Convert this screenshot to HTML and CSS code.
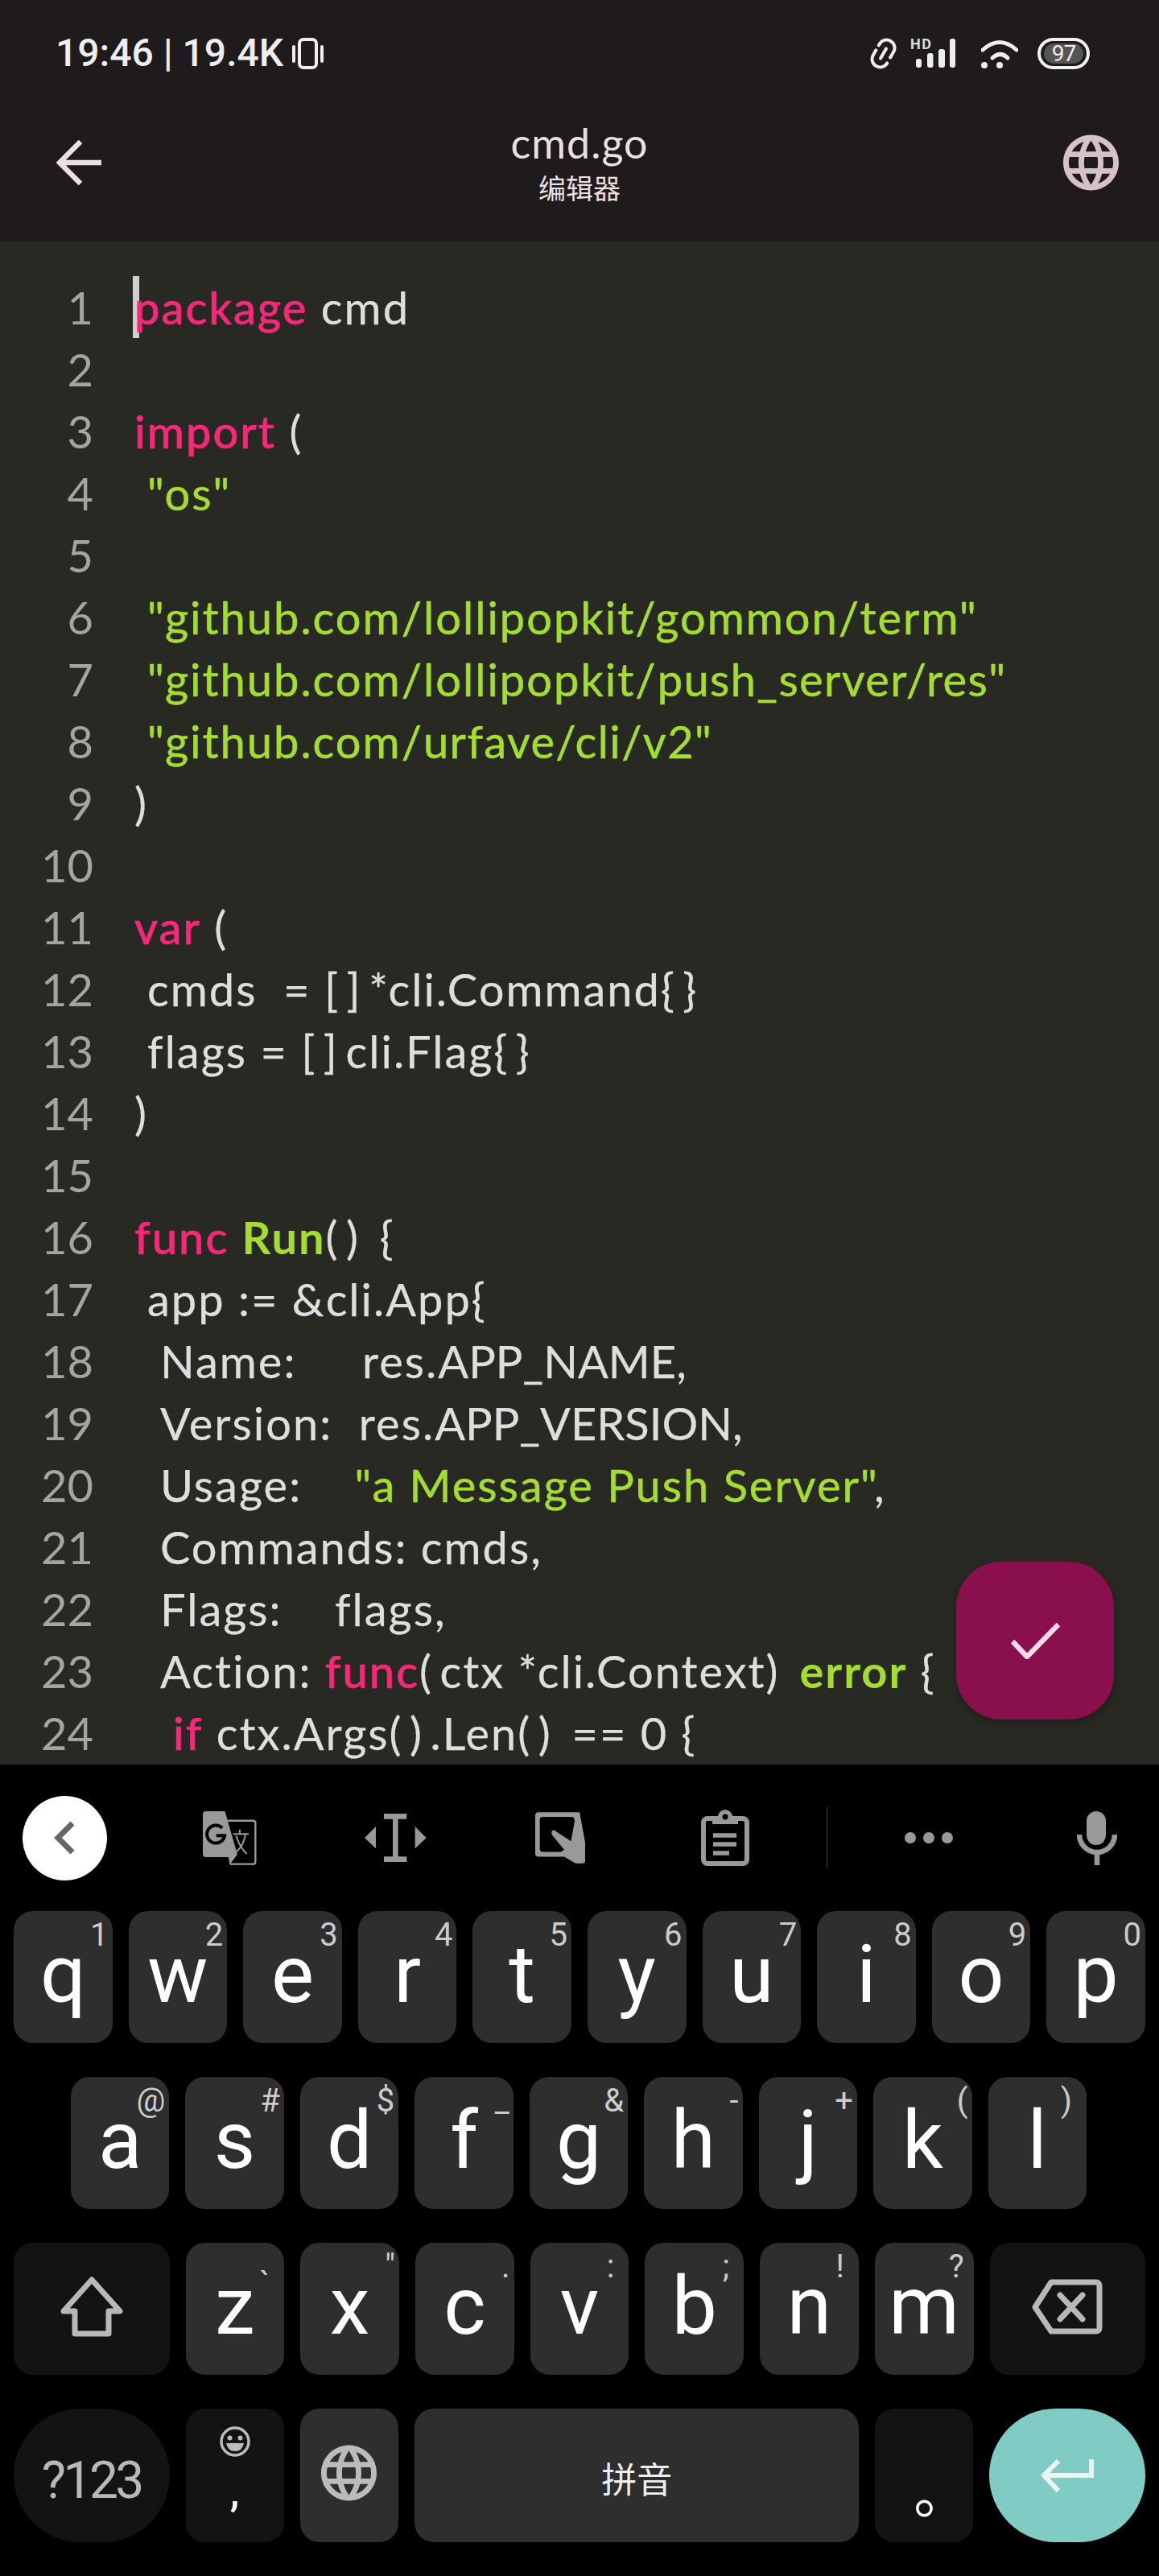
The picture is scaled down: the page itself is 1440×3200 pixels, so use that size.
FILE: index.html
```html
<!DOCTYPE html>
<html lang="zh">
<head>
<meta charset="utf-8">
<title>cmd.go</title>
<link rel="stylesheet" href="styles.css">
</head>
<body>
<svg class="defs" width="0" height="0"><defs><symbol id="globe" viewBox="2 2 20 20"><path d="M11.99 2C6.47 2 2 6.48 2 12s4.47 10 9.99 10C17.52 22 22 17.52 22 12S17.52 2 11.99 2zm6.93 6h-2.95c-.32-1.25-.78-2.45-1.38-3.56 1.84.63 3.37 1.91 4.33 3.56zM12 4.04c.83 1.2 1.48 2.53 1.91 3.96h-3.82c.43-1.43 1.08-2.76 1.91-3.96zM4.26 14C4.1 13.36 4 12.69 4 12s.1-1.36.26-2h3.38c-.08.66-.14 1.32-.14 2 0 .68.06 1.34.14 2H4.26zm.82 2h2.95c.32 1.25.78 2.45 1.38 3.56-1.84-.63-3.37-1.9-4.33-3.56zm2.95-8H5.08c.96-1.66 2.49-2.93 4.33-3.56C8.81 5.55 8.35 6.75 8.03 8zM12 19.96c-.83-1.2-1.48-2.53-1.91-3.96h3.82c-.43 1.43-1.08 2.76-1.91 3.96zM14.34 14H9.66c-.09-.66-.16-1.32-.16-2 0-.68.07-1.35.16-2h4.68c.09.65.16 1.32.16 2 0 .68-.07 1.34-.16 2zm.25 5.56c.6-1.11 1.06-2.31 1.38-3.56h2.95c-.96 1.65-2.49 2.93-4.33 3.56zM16.36 14c.08-.66.14-1.32.14-2 0-.68-.06-1.34-.14-2h3.38c.16.64.26 1.31.26 2s-.1 1.36-.26 2h-3.38z"/></symbol></defs></svg>
<div class="phone">
  <header class="header">
    <div class="status">
      <span class="clock">19:46 | 19.4K</span>
      <svg class="ic-vibrate" viewBox="0 0 39 39"><rect x="9" y="2" width="21" height="35" rx="5" fill="none" stroke="#eee" stroke-width="4"/><rect x="0" y="9" width="4" height="22" rx="2" fill="#eee"/><rect x="35" y="9" width="4" height="22" rx="2" fill="#eee"/></svg>
      <span class="status-spacer"></span>
      <svg class="ic-link" viewBox="0 0 35 39"><g transform="translate(17.5 19.5) rotate(30)" fill="none" stroke="#eee" stroke-width="4" stroke-linecap="round"><path d="M-10 -6V-8A10 10 0 0 1 10 -8V0"/><path d="M10 8A10 10 0 0 1 -10 8V1"/><path d="M0 -7V7"/></g></svg>
      <div class="signal"><span class="hd">HD</span><svg class="ic-bars" viewBox="0 0 56 37"><rect x="7" y="25" width="7" height="11" rx="3" fill="#eee"/><rect x="21" y="18" width="7.500" height="18" rx="3" fill="#eee"/><rect x="35" y="13" width="8" height="23" rx="3" fill="#eee"/><rect x="49" y="0" width="7" height="36" rx="3" fill="#eee"/></svg></div>
      <svg class="ic-wifi" viewBox="0 0 46 37"><g fill="none" stroke="#eee" stroke-width="5" stroke-linecap="round"><path d="M2 14Q23 -5 44 14"/><path d="M14 24Q24 15 33 24"/></g><circle cx="4" cy="33" r="4" fill="#eee"/><circle cx="23" cy="33" r="4" fill="#eee"/></svg>
      <div class="battery"><span class="battery-level">97</span></div>
    </div>
    <div class="appbar">
      <svg class="ic-back" viewBox="0 0 56 56"><path d="M56 28H5M30 2L4 28L30 54" fill="none" stroke="#ebe0e1" stroke-width="6.500"/></svg>
      <div class="title-block">
        <div class="title">cmd.go</div>
        <div class="subtitle">编辑器</div>
      </div>
      <svg class="ic-globe"><use href="#globe"/></svg>
    </div>
  </header>

  <main class="editor">
    <div class="line"><span class="num">1</span><span class="code"><span class="caret"></span><span class="kw">package</span> cmd</span></div>
    <div class="line"><span class="num">2</span><span class="code"></span></div>
    <div class="line"><span class="num">3</span><span class="code"><span class="kw">import</span> (</span></div>
    <div class="line"><span class="num">4</span><span class="code">	<span class="str">"os"</span></span></div>
    <div class="line"><span class="num">5</span><span class="code"></span></div>
    <div class="line"><span class="num">6</span><span class="code">	<span class="str">"github.com/lollipopkit/gommon/term"</span></span></div>
    <div class="line"><span class="num">7</span><span class="code">	<span class="str">"github.com/lollipopkit/<span class="tight">push_server/res</span>"</span></span></div>
    <div class="line"><span class="num">8</span><span class="code">	<span class="str">"github.com/<span class="tight">urfave/cli/v2</span>"</span></span></div>
    <div class="line"><span class="num">9</span><span class="code">)</span></div>
    <div class="line"><span class="num">10</span><span class="code"></span></div>
    <div class="line"><span class="num">11</span><span class="code"><span class="kw">var</span> (</span></div>
    <div class="line"><span class="num">12</span><span class="code">	cmds  = <span class="punc">[]</span>*cli.Command<span class="punc">{}</span></span></div>
    <div class="line"><span class="num">13</span><span class="code">	flags = <span class="punc">[]</span>cli.Flag<span class="punc">{}</span></span></div>
    <div class="line"><span class="num">14</span><span class="code">)</span></div>
    <div class="line"><span class="num">15</span><span class="code"></span></div>
    <div class="line"><span class="num">16</span><span class="code"><span class="kw">func</span> <span class="str bold">Run</span><span class="punc">()</span> {</span></div>
    <div class="line"><span class="num">17</span><span class="code">	app := &amp;cli.App{</span></div>
    <div class="line"><span class="num">18</span><span class="code">		Name:     res.<span class="caps">APP_NAME</span>,</span></div>
    <div class="line"><span class="num">19</span><span class="code">		Version:  res.<span class="caps">APP_VERSION</span>,</span></div>
    <div class="line"><span class="num">20</span><span class="code">		Usage:    <span class="str">"a Message Push Server"</span>,</span></div>
    <div class="line"><span class="num">21</span><span class="code">		Commands: cmds,</span></div>
    <div class="line"><span class="num">22</span><span class="code">		Flags:    flags,</span></div>
    <div class="line"><span class="num">23</span><span class="code">		Action: <span class="kw">func</span><span class="punc">(</span>ctx *cli.Context<span class="punc">)</span> <span class="str bold">error</span> <span class="punc">{</span></span></div>
    <div class="line"><span class="num">24</span><span class="code">			<span class="kw">if</span> ctx.Args<span class="punc">()</span>.Len<span class="punc">()</span> == 0 {</span></div>
    <button class="fab"><svg class="ic-check" viewBox="0 0 61 46"><path d="M2 24L20 43L59 3" fill="none" stroke="#ffd9e3" stroke-width="6.500"/></svg></button>
  </main>

  <section class="keyboard">
    <div class="toolbar">
      <div class="tb-back"><svg class="ic-chevron" viewBox="0 0 26 42"><path d="M23 3L5 21L23 39" fill="none" stroke="#666" stroke-width="7"/></svg></div>
      <svg class="tb-translate" viewBox="0 0 200 200"><path fill="#999" d="M12 0H82L128 160L100 198L95 170H12A12 12 0 0 1 0 158V12A12 12 0 0 1 12 0Z"/><path fill="none" stroke="#999" stroke-width="7" d="M92 35H188A8 8 0 0 1 195 43V188A8 8 0 0 1 188 196H100"/><path fill="none" stroke="#000" stroke-width="12" d="M72 62A33 33 0 1 0 81 90H50"/><path fill="none" stroke="#999" stroke-width="6" d="M112 84H170M137 68V84M158 86C152 120 135 145 115 156M124 90C130 115 145 140 163 158"/></svg>
      <svg class="tb-cursor" viewBox="0 0 230 180"><path fill="#999" d="M72 0H157V20H125V160H157V180H72V160H105V20H72ZM42 48V130L0 90ZM188 48V130L230 90Z"/></svg>
      <svg class="tb-hand" viewBox="0 0 187 190"><path fill="#999" fill-rule="evenodd" d="M12 0H165L187 120V178A12 12 0 0 1 175 190H150L108 165H12A12 12 0 0 1 0 153V12A12 12 0 0 1 12 0ZM28 17A11 11 0 0 0 17 28V136A11 11 0 0 0 28 147H95L108 140L66 88Q58 78 62 70Q68 63 76 70L133 108L147 30Q145 17 135 17Z"/></svg>
      <svg class="tb-clip" viewBox="0 0 60 70"><rect x="3" y="11" width="54" height="56" rx="5" fill="none" stroke="#999" stroke-width="6"/><path fill="#999" d="M14 9H21A9 9 0 0 1 39 9H46V18H14Z"/><circle cx="30" cy="9" r="3.500" fill="#000"/><path d="M15 32H44M15 43H44M15 54H35" stroke="#999" stroke-width="5.500"/></svg>
      <span class="tb-divider"></span>
      <span class="tb-dots"><i class="dot"></i><i class="dot"></i><i class="dot"></i></span>
      <svg class="tb-mic" viewBox="0 0 50 67"><rect x="12" y="0" width="24" height="42" rx="12" fill="#999"/><path d="M3 29A22 22 0 0 0 47 29M25 50V67" fill="none" stroke="#999" stroke-width="6.500"/></svg>
    </div>
    <div class="rows">
      <div class="row">
        <div class="key">q<span class="hint">1</span></div>
        <div class="key">w<span class="hint">2</span></div>
        <div class="key">e<span class="hint">3</span></div>
        <div class="key">r<span class="hint">4</span></div>
        <div class="key">t<span class="hint">5</span></div>
        <div class="key">y<span class="hint">6</span></div>
        <div class="key">u<span class="hint">7</span></div>
        <div class="key">i<span class="hint">8</span></div>
        <div class="key">o<span class="hint">9</span></div>
        <div class="key">p<span class="hint">0</span></div>
      </div>
      <div class="row row-inset">
        <div class="key">a<span class="hint">@</span></div>
        <div class="key">s<span class="hint">#</span></div>
        <div class="key">d<span class="hint">$</span></div>
        <div class="key">f<span class="hint">_</span></div>
        <div class="key">g<span class="hint">&amp;</span></div>
        <div class="key">h<span class="hint">-</span></div>
        <div class="key">j<span class="hint">+</span></div>
        <div class="key">k<span class="hint">(</span></div>
        <div class="key">l<span class="hint hint-in">)</span></div>
      </div>
      <div class="row">
        <div class="key key-fn key-wide"><svg class="ic-shift" viewBox="0 0 78 76"><path d="M39 5L74 44H60V72H18V44H4Z" fill="none" stroke="#b8b8b8" stroke-width="7" stroke-linejoin="round"/></svg></div>
        <div class="key">z<span class="hint hint-low">`</span></div>
        <div class="key">x<span class="hint">"</span></div>
        <div class="key">c<span class="hint">.</span></div>
        <div class="key">v<span class="hint hint-in">:</span></div>
        <div class="key">b<span class="hint hint-in">;</span></div>
        <div class="key">n<span class="hint hint-in">!</span></div>
        <div class="key">m<span class="hint hint-mid">?</span></div>
        <div class="key key-fn key-wide"><svg class="ic-del" viewBox="0 0 88 69"><path d="M24 4H80A4 4 0 0 1 84 8V61A4 4 0 0 1 80 65H24L4 35Z" fill="none" stroke="#b8b8b8" stroke-width="7" stroke-linejoin="round"/><path d="M35 20L63 50M63 20L35 50" stroke="#b8b8b8" stroke-width="7" stroke-linecap="round"/></svg></div>
      </div>
      <div class="row row-bottom">
        <div class="key key-fn key-wide key-pill key-symbols">?123</div>
        <div class="key key-fn key-comma"><svg class="ic-smile" viewBox="0 0 38 38"><circle cx="19" cy="19" r="17" fill="none" stroke="#bbb" stroke-width="3.500"/><circle cx="12.500" cy="14.500" r="3" fill="#bbb"/><circle cx="25.500" cy="14.500" r="3" fill="#bbb"/><path d="M8 21H30Q28 31 19 31Q10 31 8 21Z" fill="#bbb"/></svg><span class="comma">,</span></div>
        <div class="key"><svg class="ic-globe-key"><use href="#globe"/></svg></div>
        <div class="key key-space">拼音</div>
        <div class="key key-fn key-period">。</div>
        <div class="key key-wide key-pill key-enter"><svg class="ic-enter" viewBox="0 0 66 41"><path d="M63 0V20H4M22 2L4 20L22 39" fill="none" stroke="#e8f5f3" stroke-width="6"/></svg></div>
      </div>
    </div>
  </section>
</div>
</body>
</html>
```
FILE: styles.css
```css
* { box-sizing: border-box; }
html, body { margin: 0; padding: 0; background: #000; }
.defs { position: absolute; }
.phone { width: 1440px; height: 3200px; display: flex; flex-direction: column; overflow: hidden; font-family: "Roboto", "Noto Sans CJK SC", sans-serif; }

/* Header */
.header { height: 300px; background: #1f1b1d; flex: none; }
.status { height: 110px; padding: 22px 86px 0 69px; display: flex; align-items: center; color: #eee; }
.clock { font: 500 48px/1 "Roboto", sans-serif; letter-spacing: 0; white-space: pre; }
.ic-vibrate { width: 39px; height: 39px; margin-left: 11px; }
.status-spacer { flex: 1; }
.ic-link { width: 35px; height: 39px; }
.signal { position: relative; width: 56px; height: 39px; margin-left: 16px; }
.hd { position: absolute; left: 0; top: -2px; font: 700 18px/20px "Roboto", sans-serif; letter-spacing: 1.5px; color: #ddd; }
.ic-bars { position: absolute; left: 0; top: 1px; width: 56px; height: 37px; }
.ic-wifi { width: 46px; height: 37px; margin-left: 32px; }
.battery { width: 65px; height: 39px; margin-left: 24px; border: 4px solid #f2f2f2; border-radius: 20px; padding: 3px 4px; display: flex; }
.battery-level { flex: 1; background: #555; border-radius: 13px; color: #eee; font: 400 28px/25px "Roboto", sans-serif; letter-spacing: -1px; text-align: center; }
.appbar { height: 190px; padding: 0 50px 6px 50px; display: grid; grid-template-columns: 1fr auto 1fr; align-items: center; }
.ic-back { width: 56px; height: 56px; margin-left: 20px; }
.title-block { text-align: center; color: #ebe0e1; margin-bottom: 4px; }
.title { font: 400 52px/56px "Lato", sans-serif; letter-spacing: 1px; }
.subtitle { font: 400 34px/36px "Noto Sans CJK SC", sans-serif; margin-top: 10px; }
.ic-globe { width: 69px; height: 70px; justify-self: end; fill: #d4c2c8; }

/* Editor */
.editor { position: relative; height: 1892px; flex: none; padding-top: 43px; background: #282923; overflow: hidden; font: 400 56px/77px "Lato", sans-serif; letter-spacing: 2px; color: #dedede; }
.line { display: flex; height: 77px; }
.num { width: 116px; flex: none; text-align: right; color: #a4a4a4; letter-spacing: 0; }
.code { position: relative; margin-left: 51px; white-space: pre; tab-size: 16px; -webkit-text-stroke: .25px currentColor; }
.caret { position: absolute; left: -2px; top: 0; width: 8px; height: 77px; background: #cfcfcf; }
.kw { position: relative; color: #f5287a; font-weight: 500; -webkit-text-stroke: .6px currentColor; }
.str { color: #a4dd30; -webkit-text-stroke: .5px currentColor; }
.bold { font-weight: 700; -webkit-text-stroke: 0; }
.punc { letter-spacing: 10.500px; }
.caps { letter-spacing: 0; }
.tight { letter-spacing: 1.400px; }
.fab { position: absolute; left: 1188px; top: 1640px; width: 196px; height: 196px; padding: 0; border: 0; border-radius: 56px; background: #8a0f4d; display: flex; align-items: center; justify-content: center; box-shadow: 0 4px 12px rgba(0,0,0,.25); }
.ic-check { width: 61px; height: 46px; }

/* Keyboard */
.keyboard { flex: 1; background: #000; }
.toolbar { height: 182px; display: flex; align-items: center; padding-left: 28px; }
.tb-back { width: 105px; height: 105px; border-radius: 50%; background: #fff; display: flex; align-items: center; justify-content: center; }
.ic-chevron { width: 26px; height: 42px; margin-right: 2px; }
.tb-translate { width: 67px; height: 67px; margin-left: 119px; }
.tb-cursor { width: 76.7px; height: 60px; margin-left: 134px; }
.tb-hand { width: 62.5px; height: 64px; margin-left: 135px; }
.tb-clip { width: 60px; height: 70px; margin-left: 144px; }
.tb-divider { width: 3px; height: 76px; margin-left: 95px; background: #1a1a1a; }
.tb-dots { display: flex; gap: 9px; margin-left: 95px; }
.dot { width: 14px; height: 14px; border-radius: 50%; background: #999; }
.tb-mic { width: 50px; height: 67px; margin-left: 154px; }
.rows { display: flex; flex-direction: column; gap: 42px; }
.row { display: flex; gap: 20px; height: 164px; padding: 0 17px; }
.row-inset { padding: 0 90px 0 88px; }
.row-bottom { height: 166px; }
.key { position: relative; flex: 1 1 0; min-width: 0; border-radius: 24px; background: #2e2e2e; color: #fff; display: flex; align-items: center; justify-content: center; font: 400 100px/100px "Roboto", sans-serif; padding-bottom: 6px; }
.key-fn { background: #131313; }
.key-wide { flex: 0 0 193.500px; }
.key-pill { border-radius: 83px; }
.hint { position: absolute; right: 5px; top: 10px; font: 400 40px/40px "Roboto", sans-serif; color: #ccc; }
.hint-in { right: 18px; }
.hint-mid { right: 12px; }
.hint-low { top: 32px; right: 18px; }
.ic-shift { width: 78px; height: 76px; }
.ic-del { width: 88px; height: 69px; }
.key-symbols { font-size: 64px; letter-spacing: -3.5px; color: #b8b8b8; padding-bottom: 0; padding-top: 14px; }
.key-comma { flex-direction: column; justify-content: flex-start; padding: 22px 0 0; }
.ic-smile { width: 38px; height: 38px; }
.comma { font: 500 52px/52px "Roboto", sans-serif; margin-top: 18px; }
.ic-globe-key { width: 69px; height: 70px; fill: #bbb; }
.key-space { flex: 0 0 552px; font: 400 44px/44px "Noto Sans CJK SC", sans-serif; color: #eee; padding: 6px 0 0; }
.key-period { font: 400 68px/68px "Noto Sans CJK TC", sans-serif; padding: 76px 0 0; }
.key-enter { background: #80cbc4; }
.ic-enter { width: 66px; height: 41px; margin-top: 6px; }
```
